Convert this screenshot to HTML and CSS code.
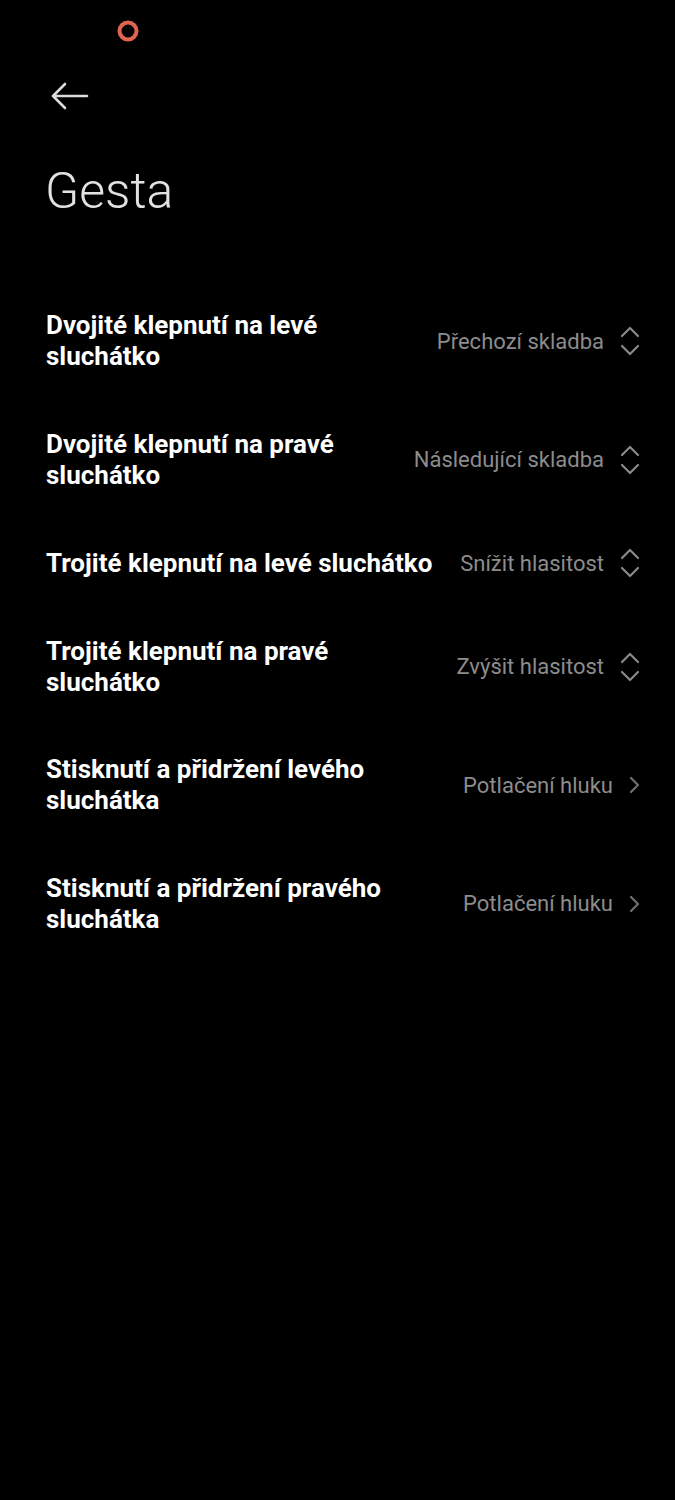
FILE: index.html
```html
<!DOCTYPE html>
<html lang="cs">
<head>
    <meta charset="UTF-8">
    <meta name="viewport" content="width=device-width, initial-scale=1.0">
    <title>Gesta</title>
    <link rel="stylesheet" href="styles.css">
</head>
<body>
    <div class="status-bar">
        <svg class="rec-dot" width="22" height="22" viewBox="0 0 22 22">
            <circle cx="11" cy="11" r="8.5" fill="none" stroke="#e0644e" stroke-width="4"/>
        </svg>
    </div>

    <div class="header">
        <svg class="back" width="40" height="30" viewBox="0 0 40 30">
            <path d="M3 15 H37 M15 3 L3 15 L15 27" fill="none" stroke="#dcdcdc" stroke-width="2.6" stroke-linecap="round" stroke-linejoin="round"/>
        </svg>
    </div>

    <h1 class="title">Gesta</h1>

    <div class="list">
        <div class="row">
            <div class="label">Dvojité klepnutí na levé sluchátko</div>
            <div class="value">Přechozí skladba</div>
            <svg class="updown" width="20" height="32" viewBox="0 0 20 32">
                <path d="M2 11 L10 3 L18 11 M2 21 L10 29 L18 21" fill="none" stroke="#8a8a8a" stroke-width="2.2" stroke-linecap="round" stroke-linejoin="round"/>
            </svg>
        </div>
        <div class="row">
            <div class="label">Dvojité klepnutí na pravé sluchátko</div>
            <div class="value">Následující skladba</div>
            <svg class="updown" width="20" height="32" viewBox="0 0 20 32">
                <path d="M2 11 L10 3 L18 11 M2 21 L10 29 L18 21" fill="none" stroke="#8a8a8a" stroke-width="2.2" stroke-linecap="round" stroke-linejoin="round"/>
            </svg>
        </div>
        <div class="row">
            <div class="label">Trojité klepnutí na levé sluchátko</div>
            <div class="value">Snížit hlasitost</div>
            <svg class="updown" width="20" height="32" viewBox="0 0 20 32">
                <path d="M2 11 L10 3 L18 11 M2 21 L10 29 L18 21" fill="none" stroke="#8a8a8a" stroke-width="2.2" stroke-linecap="round" stroke-linejoin="round"/>
            </svg>
        </div>
        <div class="row">
            <div class="label">Trojité klepnutí na pravé sluchátko</div>
            <div class="value">Zvýšit hlasitost</div>
            <svg class="updown" width="20" height="32" viewBox="0 0 20 32">
                <path d="M2 11 L10 3 L18 11 M2 21 L10 29 L18 21" fill="none" stroke="#8a8a8a" stroke-width="2.2" stroke-linecap="round" stroke-linejoin="round"/>
            </svg>
        </div>
        <div class="row">
            <div class="label">Stisknutí a přidržení levého sluchátka</div>
            <div class="value">Potlačení hluku</div>
            <svg class="chevron" width="12" height="20" viewBox="0 0 12 20">
                <path d="M3 3 L10 10 L3 17" fill="none" stroke="#6f6f6f" stroke-width="2.2" stroke-linecap="round" stroke-linejoin="round"/>
            </svg>
        </div>
        <div class="row">
            <div class="label">Stisknutí a přidržení pravého sluchátka</div>
            <div class="value">Potlačení hluku</div>
            <svg class="chevron" width="12" height="20" viewBox="0 0 12 20">
                <path d="M3 3 L10 10 L3 17" fill="none" stroke="#6f6f6f" stroke-width="2.2" stroke-linecap="round" stroke-linejoin="round"/>
            </svg>
        </div>
    </div>
</body>
</html>
```

FILE: styles.css
```css
body {
    margin: 0;
    background-color: #000;
    color: #fff;
    font-family: Roboto, "Noto Sans", sans-serif;
    min-height: 1500px;
}
.status-bar {
    height: 62px;
    padding-left: 117px;
    padding-top: 20px;
    box-sizing: border-box;
}
.rec-dot {
    display: block;
}
.header {
    height: 50px;
    padding-left: 50px;
    padding-top: 19px;
    box-sizing: border-box;
}
.back {
    display: block;
}
.title {
    margin: 46px 0 0 0;
    padding-left: 45px;
    font-size: 50px;
    font-weight: 300;
    line-height: 66px;
    color: #e2e2e2;
}
.list {
    margin-top: 58px;
    padding: 0 35px 0 46px;
}
.row {
    display: flex;
    align-items: center;
    padding: 28px 0 28.5px;
}
.label {
    flex: 1;
    margin-right: 20px;
    font-size: 26px;
    font-weight: 700;
    line-height: 31px;
    color: #fff;
}
.value {
    flex-shrink: 0;
    font-size: 22px;
    color: #8c8c8c;
}
.updown {
    flex-shrink: 0;
    margin-left: 16px;
}
.chevron {
    flex-shrink: 0;
    margin-left: 15px;
}
```
